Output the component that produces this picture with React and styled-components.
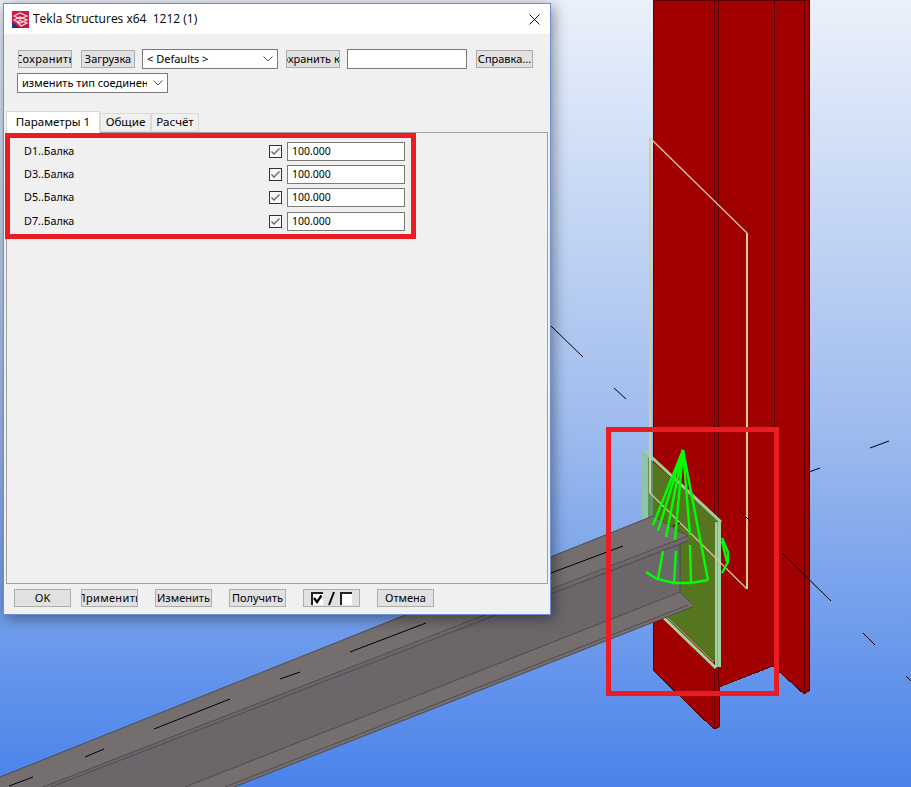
import React from 'react';
import styled, { createGlobalStyle } from 'styled-components';

const GlobalStyle = createGlobalStyle`
  html, body {
    margin: 0;
    padding: 0;
    width: 911px;
    height: 787px;
    overflow: hidden;
  }
  body {
    font-family: "Noto Sans", "Liberation Sans", sans-serif;
    font-size: 11px;
    color: #000;
  }
`;

const Desktop = styled.div`
  position: relative;
  width: 911px;
  height: 787px;
  overflow: hidden;
  background: linear-gradient(180deg, #ebf1fb 0%, #a0bdee 53%, #4a83ea 100%);
`;

const SceneSvg = styled.svg`
  position: absolute;
  inset: 0;
`;

const Dialog = styled.div`
  position: absolute;
  left: 3px;
  top: 3px;
  width: 548px;
  height: 612px;
  box-sizing: border-box;
  display: flex;
  flex-direction: column;
  border: 1px solid #6a8fd8;
  background: #f0f0f0;
  box-shadow: 2px 3px 14px rgba(0, 0, 0, 0.45);
`;

const TitleBar = styled.div`
  height: 30px;
  flex: none;
  display: flex;
  align-items: center;
  padding: 0 10px 0 8px;
  background: #fff;
`;

const TitleText = styled.span`
  margin-left: 4px;
  margin-bottom: 2px;
  flex: 1;
  font-family: "Open Sans", "Noto Sans", sans-serif;
  font-size: 12px;
  white-space: pre;
`;

const Toolbar = styled.div`
  flex: none;
  padding: 15px 0 0 14px;
`;

const ToolRow = styled.div`
  display: flex;
  align-items: center;
  height: 20px;
`;

const Button = styled.button`
  box-sizing: border-box;
  flex: none;
  display: flex;
  align-items: center;
  justify-content: center;
  width: ${p => p.$width || 54}px;
  height: 18px;
  margin-left: ${p => p.$left || 0}px;
  padding: 0 0 2px;
  overflow: hidden;
  white-space: nowrap;
  border: 1px solid #adadad;
  background: #e1e1e1;
  font: inherit;
  letter-spacing: ${p => (p.$spread ? '0.35px' : 'normal')};
  color: #000;
`;

const Select = styled.div`
  box-sizing: border-box;
  flex: none;
  display: flex;
  align-items: center;
  width: ${p => p.$width}px;
  height: 20px;
  margin-left: ${p => p.$left || 0}px;
  margin-top: ${p => p.$top || 0}px;
  padding: 0 4px 1px 4px;
  border: 1px solid #7a7a7a;
  background: #fff;
  white-space: nowrap;
`;

const SelectText = styled.span`
  flex: 1;
  min-width: 0;
  margin-right: 6px;
  overflow: hidden;
`;

const TextField = styled.input`
  box-sizing: border-box;
  flex: none;
  width: ${p => p.$width}px;
  height: ${p => p.$height}px;
  margin-left: ${p => p.$left || 0}px;
  padding: 0 0 1px 4px;
  border: 1px solid #7a7a7a;
  background: #fff;
  font-family: inherit;
  font-size: 10.5px;
  color: #000;
  outline: none;
`;

const TabStrip = styled.div`
  flex: none;
  display: flex;
  align-items: flex-end;
  height: 21px;
  margin-top: 18px;
  padding-left: 2px;
`;

const Tab = styled.div`
  box-sizing: border-box;
  position: relative;
  display: flex;
  align-items: center;
  justify-content: center;
  width: ${p => p.$width}px;
  height: ${p => (p.$active ? 22 : 19)}px;
  margin-bottom: ${p => (p.$active ? -1 : 0)}px;
  padding-bottom: 2px;
  border: 1px solid #d9d9d9;
  border-bottom: ${p => (p.$active ? 'none' : '1px solid #d9d9d9')};
  background: ${p => (p.$active ? '#fff' : '#f0f0f0')};
  font-size: 11.6px;
  z-index: ${p => (p.$active ? 1 : 0)};
`;

const Panel = styled.div`
  flex: 1;
  margin: 0 2px;
  padding: 9px 0 0 17px;
  border: 1px solid #a0a0a0;
  background: #f0f0f0;
`;

const ParamRow = styled.div`
  display: grid;
  grid-template-columns: 245px 13px 123px;
  align-items: center;
  height: 19px;
  margin-bottom: 4px;
  &:nth-child(3) {
    margin-bottom: 5px;
  }
`;

const ParamName = styled.span`
  margin-bottom: 2px;
  font-size: 10.8px;
`;

const CheckBox = styled.span`
  box-sizing: border-box;
  display: flex;
  width: 13px;
  height: 13px;
  border: 1px solid #333;
  background: #f7f7f7;
`;

const ParamField = styled(TextField)`
  margin-left: 5px;
`;

const Footer = styled.div`
  flex: none;
  display: flex;
  height: 30px;
  box-sizing: border-box;
  padding: 5px 0 0 10px;
`;

const ToggleGroup = styled(Button)`
  gap: 5px;
  padding: 0;
`;

const MiniBox = styled.span`
  box-sizing: border-box;
  display: flex;
  width: 12px;
  height: 13px;
  border-top: 2px solid #222;
  border-left: 2px solid #222;
  background: #fff;
`;

const Highlight = styled.div`
  position: absolute;
  left: 1px;
  top: 129px;
  width: 411px;
  height: 106px;
  box-sizing: border-box;
  border: 5px solid #ed1c24;
  pointer-events: none;
`;

const params = ['D1..Балка', 'D3..Балка', 'D5..Балка', 'D7..Балка'];

const blackLines = [
  [551, 326, 583, 357], [614, 388, 626, 399], [551, 573, 623, 546], [350, 652, 426, 623],
  [280, 679, 300, 672], [154, 729, 230, 699], [85, 757, 104, 749], [9, 786, 33, 777],
  [673, 526, 680, 523], [739, 510, 751, 522], [782, 553, 831, 601], [863, 633, 875, 645],
  [906, 676, 911, 681], [870, 448, 889, 441], [809, 472, 820, 468],
];

const coneLines = [
  [683, 450, 653, 525], [683, 450, 658, 531], [683, 450, 666, 537], [663, 551, 658, 579],
  [683, 450, 675, 540], [676, 551, 674, 583], [683, 450, 690, 535], [690, 545, 691, 583],
  [683, 450, 708, 580], [722, 541, 727, 562],
];

function Scene() {
  return (
    <SceneSvg width="911" height="787" viewBox="0 0 911 787">
      <defs>
        <pattern id="dither" width="2" height="2" patternUnits="userSpaceOnUse">
          <rect width="2" height="2" fill="#8c5510" />
          <rect width="1" height="1" fill="#5a7a24" />
          <rect x="1" y="1" width="1" height="1" fill="#5a7a24" />
        </pattern>
      </defs>

      {/* column */}
      <polygon
        points="653,0 809,0 809,691 804,694 773,666 719,687 719,727 714,729 653,670"
        fill="#a00000"
        stroke="#5c0000"
        strokeWidth="1"
        shapeRendering="crispEdges"
      />
      {[[714, 729], [718, 687], [774, 666], [804, 694]].map(([x, y]) => (
        <line key={x} x1={x} y1="0" x2={x} y2={y} stroke="#5c0000" shapeRendering="crispEdges" />
      ))}

      {/* plate */}
      <polygon points="642,452 720,522 720,666 642,592" fill="url(#dither)" />
      <polygon points="642,452 648,457 648,597 642,592" fill="#8fc4a4" />
      <polygon points="648,457 653,462 653,602 648,597" fill="#5f9a78" opacity="0.8" />
      <polyline points="645,451 721,522" fill="none" stroke="#9fd09f" strokeWidth="3" />
      <polyline points="664,618 716,668" fill="none" stroke="#a6d3a6" strokeWidth="3" />
      <polyline points="667,617 714,662" fill="none" stroke="#62b562" strokeWidth="1.5" />
      <rect x="715" y="522" width="6" height="145" fill="#a3d0a3" />
      <rect x="717" y="522" width="1" height="145" fill="#7dbb7d" />

      {/* beam */}
      <polygon points="0,777 653,516 688,536 688,541 680,544 680,592 692,604 692,607 234,787 0,787" fill="#6b666a" />
      <polygon points="0,777 653,516 688,536 688,538 43,787 0,787" fill="#746e6e" />
      <polygon points="185,787 680,592 692,604 692,607 234,787" fill="#746e6e" />
      <g fill="none" stroke="#4f4b50" strokeWidth="1">
        <line x1="0" y1="777" x2="653" y2="516" />
        <line x1="653" y1="516" x2="688" y2="536" />
        <line x1="43" y1="787" x2="688" y2="536" />
        <line x1="51" y1="787" x2="688" y2="541" />
        <line x1="680" y1="544" x2="680" y2="592" />
        <line x1="185" y1="787" x2="680" y2="592" />
        <line x1="225" y1="787" x2="688" y2="605" />
        <line x1="234" y1="787" x2="692" y2="607" />
        <line x1="680" y1="592" x2="692" y2="604" />
      </g>

      {/* tan outline */}
      <g fill="none" stroke="#d2cca2">
        <line x1="650" y1="138" x2="650" y2="493" strokeWidth="2" />
        <line x1="747" y1="233" x2="747" y2="589" strokeWidth="2" />
        <line x1="650" y1="138" x2="747" y2="233" strokeWidth="1.2" />
        <line x1="650" y1="493" x2="747" y2="589" strokeWidth="1.2" />
      </g>

      {blackLines.map(([x1, y1, x2, y2]) => (
        <line key={`${x1}-${y1}`} x1={x1} y1={y1} x2={x2} y2={y2} stroke="#000" strokeWidth="1" />
      ))}

      {/* cone */}
      <g fill="none" stroke="#00ff00" strokeWidth="2.4">
        {coneLines.map(([x1, y1, x2, y2]) => (
          <line key={`${x2}-${y2}`} x1={x1} y1={y1} x2={x2} y2={y2} />
        ))}
        <polyline points="646,572 657,579 674,583 691,583 708,580" />
        <polyline points="722,538 728,552 728,562 722,573" />
      </g>

      <rect x="608.5" y="429.5" width="168" height="264" fill="none" stroke="#ed1c24" strokeWidth="5" />
    </SceneSvg>
  );
}

function TeklaIcon() {
  return (
    <svg width="17" height="17" viewBox="0 0 17 17">
      <rect x="0" y="0" width="17" height="17" fill="#d4173f" />
      <polygon points="0,11 8,17 0,17" fill="#1f2f86" />
      <g fill="none" stroke="#fff" strokeWidth="1.2" opacity="0.85">
        <path d="M2 5 L8 2 L15 5 L8 8 Z" />
        <path d="M2 9 L8 6 L15 9 L8 12 Z" />
        <path d="M5 11 L8 9.5 L15 12 L9 15 Z" />
      </g>
    </svg>
  );
}

function CloseIcon() {
  return (
    <svg width="11" height="11" viewBox="0 0 11 11">
      <path d="M0.5 0.5 L10.5 10.5 M10.5 0.5 L0.5 10.5" stroke="#111" strokeWidth="1" fill="none" />
    </svg>
  );
}

function Chevron() {
  return (
    <svg width="10" height="6" viewBox="0 0 10 6">
      <path d="M0.5 0.5 L5 5 L9.5 0.5" stroke="#555" strokeWidth="1" fill="none" />
    </svg>
  );
}

function CheckMark() {
  return (
    <svg width="11" height="11" viewBox="0 0 11 11">
      <path d="M1.5 5.5 L4 8 L9.5 2.5" stroke="#666" strokeWidth="1.4" fill="none" />
    </svg>
  );
}

function BlackTick() {
  return (
    <svg width="10" height="11" viewBox="0 0 10 11">
      <path d="M1 4 L4 8 L8.5 1.5" stroke="#000" strokeWidth="2.2" fill="none" />
    </svg>
  );
}

function Slash() {
  return (
    <svg width="7" height="15" viewBox="0 0 7 15">
      <path d="M1 14 L6 1" stroke="#000" strokeWidth="2" fill="none" />
    </svg>
  );
}

export default function App() {
  return (
    <Desktop>
      <GlobalStyle />
      <Scene />
      <Dialog>
        <TitleBar>
          <TeklaIcon />
          <TitleText>Tekla Structures x64  1212 (1)</TitleText>
          <CloseIcon />
        </TitleBar>
        <Toolbar>
          <ToolRow>
            <Button $spread>Сохранить</Button>
            <Button $left={9}>Загрузка</Button>
            <Select $width={136} $left={7}>
              <SelectText>&lt; Defaults &gt;</SelectText>
              <Chevron />
            </Select>
            <Button $left={8}>Сохранить как</Button>
            <TextField $width={120} $height={20} $left={7} readOnly />
            <Button $width={57} $left={9}>Справка...</Button>
          </ToolRow>
          <Select $width={151} $left={-1} $top={4}>
            <SelectText>изменить тип соединения</SelectText>
            <Chevron />
          </Select>
        </Toolbar>
        <TabStrip>
          <Tab $width={94} $active>Параметры 1</Tab>
          <Tab $width={51}>Общие</Tab>
          <Tab $width={48}>Расчёт</Tab>
        </TabStrip>
        <Panel>
          {params.map(name => (
            <ParamRow key={name}>
              <ParamName>{name}</ParamName>
              <CheckBox><CheckMark /></CheckBox>
              <ParamField $width={118} $height={19} defaultValue="100.000" readOnly />
            </ParamRow>
          ))}
        </Panel>
        <Footer>
          <Button $width={57}>OK</Button>
          <Button $width={57} $left={10} $spread>Применить</Button>
          <Button $width={57} $left={17}>Изменить</Button>
          <Button $width={57} $left={17}>Получить</Button>
          <ToggleGroup $width={57} $left={17}>
            <MiniBox><BlackTick /></MiniBox>
            <Slash />
            <MiniBox />
          </ToggleGroup>
          <Button $width={57} $left={17}>Отмена</Button>
        </Footer>
        <Highlight />
      </Dialog>
    </Desktop>
  );
}
